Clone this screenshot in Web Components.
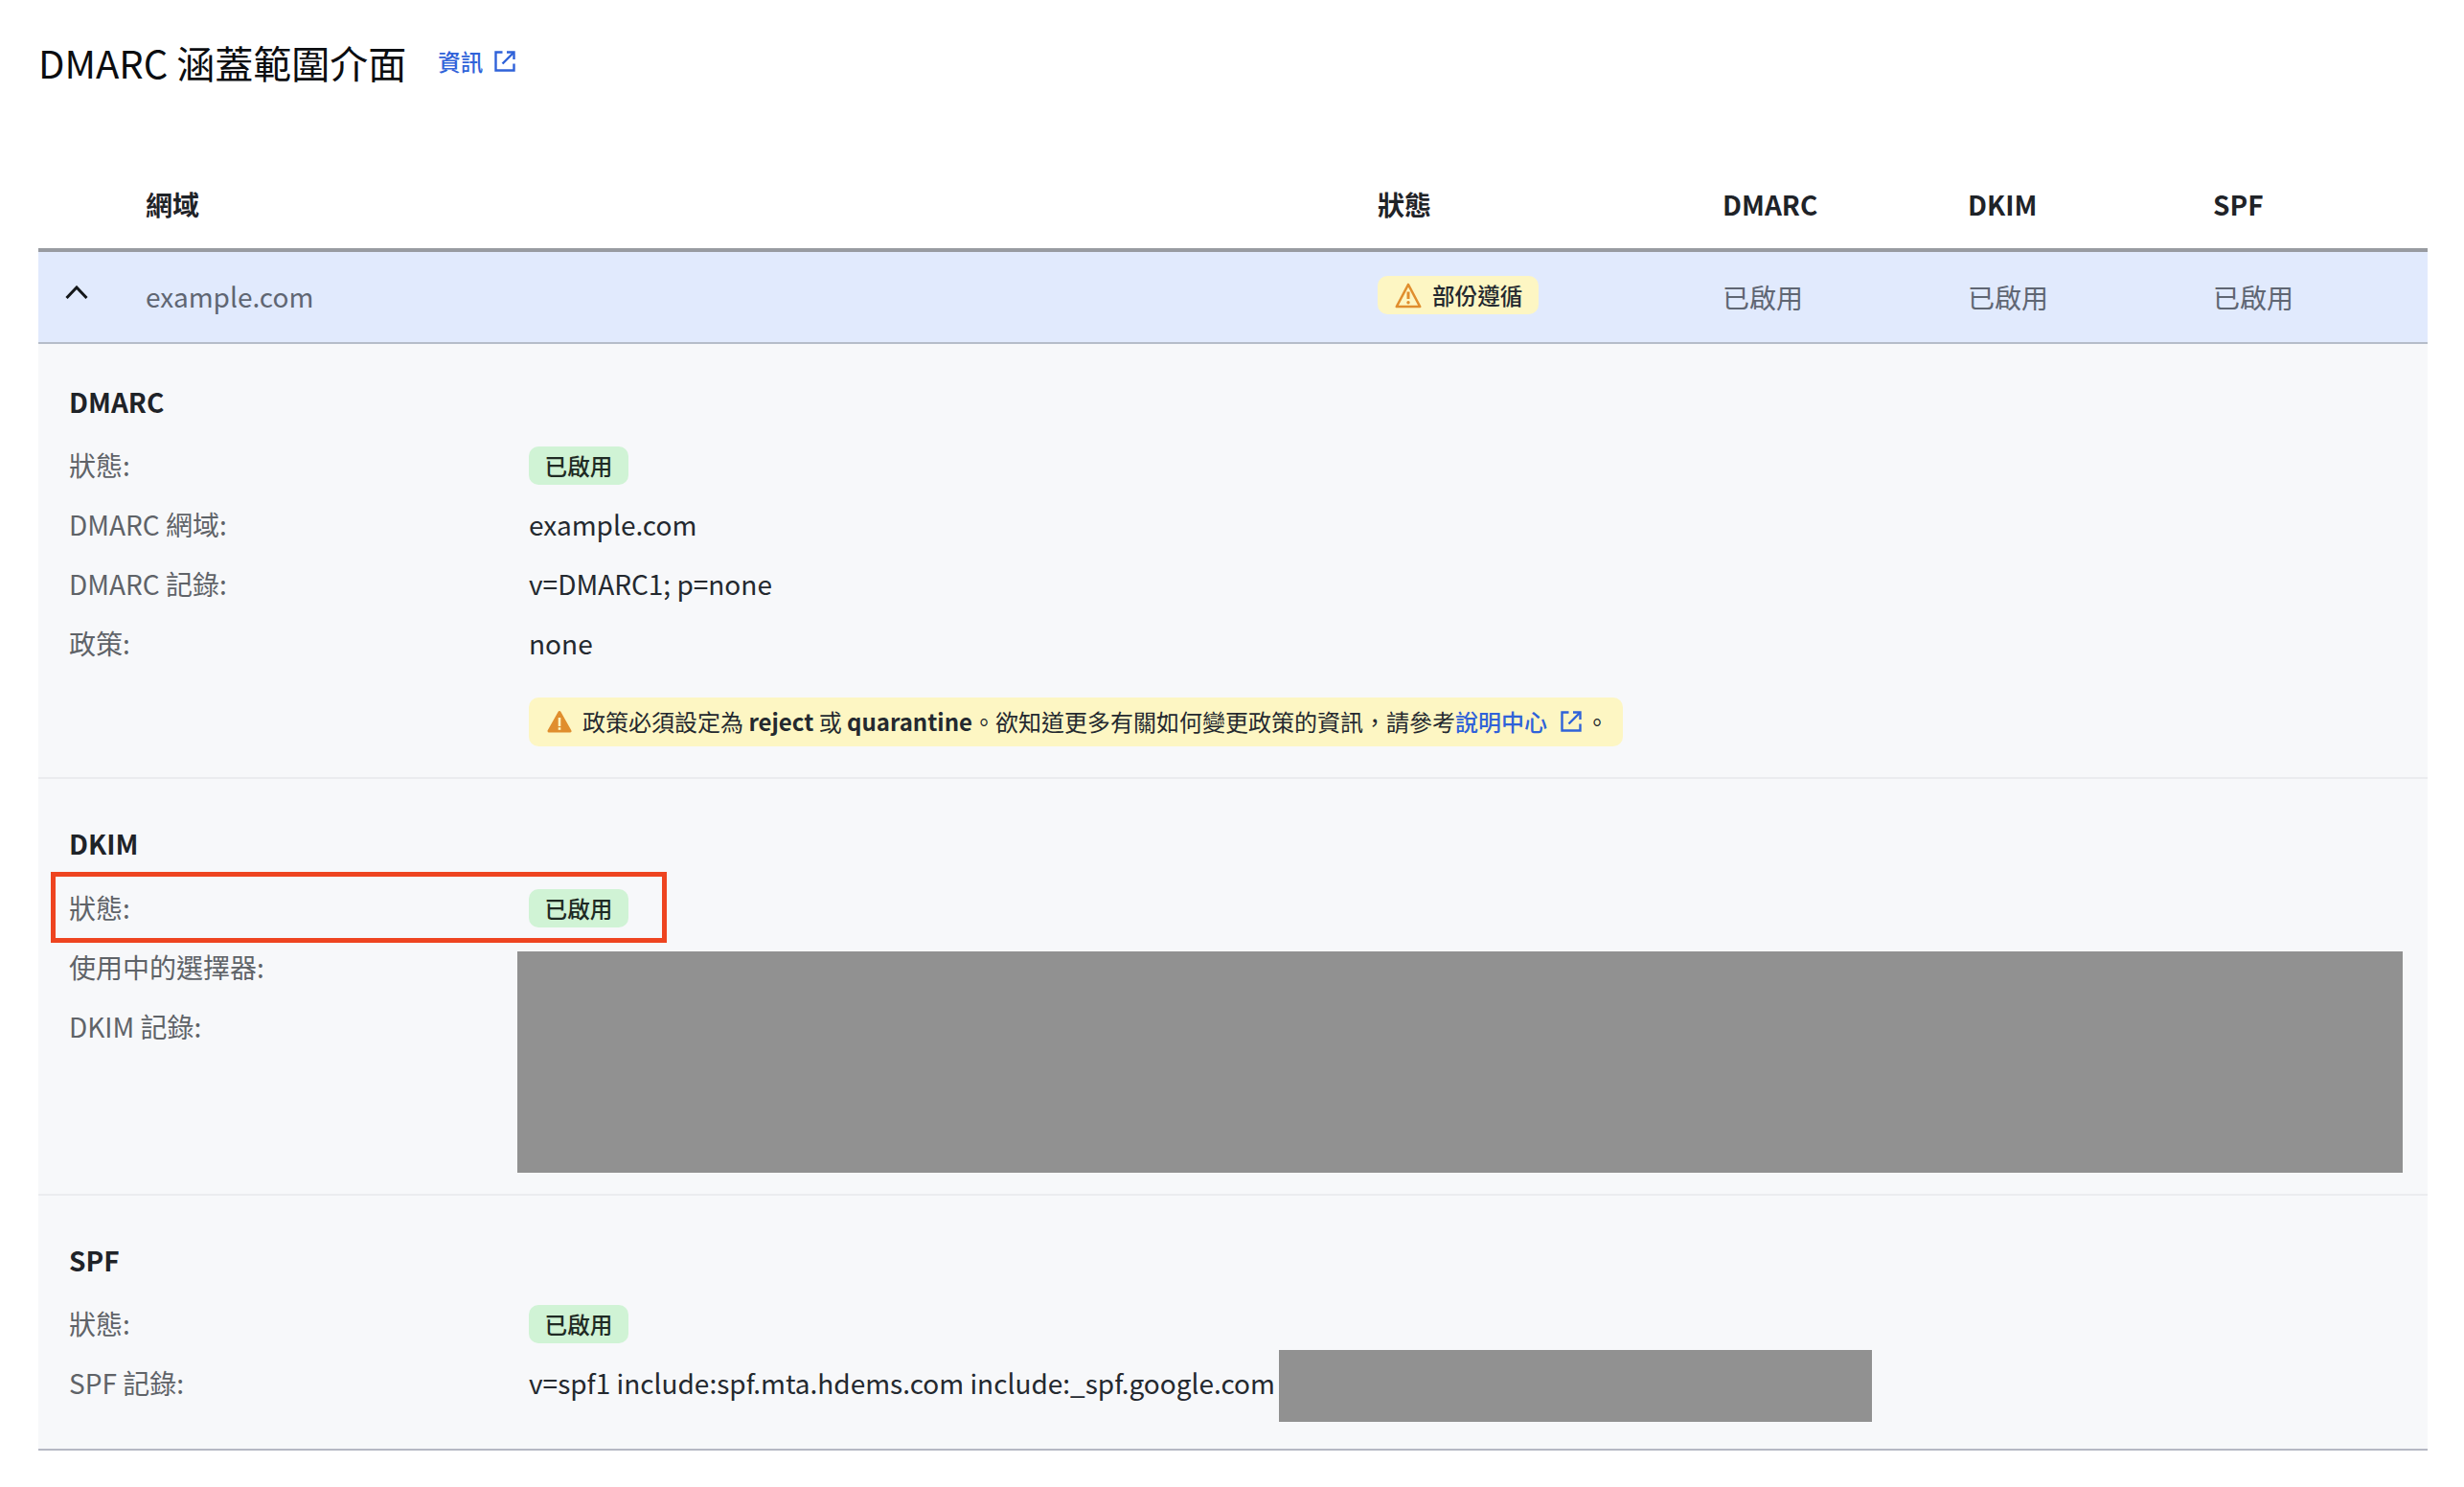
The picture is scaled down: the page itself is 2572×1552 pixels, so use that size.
<!DOCTYPE html>
<html lang="zh-TW">
<head>
<meta charset="utf-8">
<title>DMARC 涵蓋範圍介面</title>
<style>
  html, body { margin: 0; background: #fff; }
  body { font-family: "Noto Sans CJK TC", "Noto Sans", sans-serif; color: #24292f; }
</style>
</head>
<body>
<dmarc-report>
  <page-title>
    DMARC 涵蓋範圍介面
    <ext-link slot="link" size="23.5" gap="12">資訊</ext-link>
  </page-title>
  <table-head></table-head>
  <domain-row domain="example.com"></domain-row>

  <detail-section heading="DMARC" pad-top="42.5" pad-bottom="32" divider>
    <info-row label="狀態:"><status-badge>已啟用</status-badge></info-row>
    <info-row label="DMARC 網域:">example.com</info-row>
    <info-row label="DMARC 記錄:">v=DMARC1; p=none</info-row>
    <info-row label="政策:">none</info-row>
    <policy-alert>
      政策必須設定為 <b>reject</b> 或 <b>quarantine</b>。欲知道更多有關如何變更政策的資訊&#xFF0C;請參考<ext-link size="24" gap="14" style="margin-right: 4px">說明中心</ext-link>。
    </policy-alert>
  </detail-section>

  <detail-section heading="DKIM" pad-top="50.5" pad-bottom="21.5" divider>
    <info-row label="狀態:" marked><status-badge>已啟用</status-badge></info-row>
    <redact-split>
      <info-row slot="labels" label="使用中的選擇器:"></info-row>
      <info-row slot="labels" label="DKIM 記錄:"></info-row>
    </redact-split>
  </detail-section>

  <detail-section heading="SPF" pad-top="50" pad-bottom="36.5">
    <info-row label="狀態:"><status-badge>已啟用</status-badge></info-row>
    <info-row label="SPF 記錄:">v=spf1 include:spf.mta.hdems.com include:_spf.google.com<redact-block></redact-block></info-row>
  </detail-section>
</dmarc-report>

<script>
const COLUMNS = '112px 1286px 360px 256px 256px 1fr';

const EXT_ICON = `<svg viewBox="0 0 22 22" width="22" height="22" fill="none" stroke="currentColor" stroke-width="2.4">
  <path d="M8.5 1.5H1.5v19h19V13.5"/><path d="M8.5 13.5 20 2"/><path d="M13 1.5h7.5V9"/></svg>`;

class DmarcReport extends HTMLElement {
  constructor() {
    super();
    this.attachShadow({ mode: 'open' }).innerHTML = `
      <style>
        :host { display: block; padding: 40px 38px 0 40px; }
      </style>
      <slot></slot>`;
  }
}

class PageTitle extends HTMLElement {
  constructor() {
    super();
    this.attachShadow({ mode: 'open' }).innerHTML = `
      <style>
        :host { display: flex; align-items: center; gap: 33px; height: 50px; margin-bottom: 77px; font-size: 40px; line-height: 50px; color: #0b0d10; }
        .link { margin-top: -2px; display: flex; }
      </style>
      <span><slot></slot></span>
      <span class="link"><slot name="link"></slot></span>`;
  }
}

class ExtLink extends HTMLElement {
  constructor() {
    super();
    const size = this.getAttribute('size') || 24;
    const gap = this.getAttribute('gap') || 10;
    this.attachShadow({ mode: 'open' }).innerHTML = `
      <style>
        :host { display: inline-flex; align-items: center; gap: ${gap}px; height: 30px; font-size: ${size}px; color: #2f62d9; line-height: 30px; font-weight: 500; vertical-align: top; }
        svg { display: block; }
      </style>
      <span><slot></slot></span>${EXT_ICON}`;
  }
}

class TableHead extends HTMLElement {
  constructor() {
    super();
    this.attachShadow({ mode: 'open' }).innerHTML = `
      <style>
        :host { display: grid; grid-template-columns: ${COLUMNS}; align-items: center; height: 92px; border-bottom: 4px solid #989ba1; font-size: 28px; font-weight: 700; color: #1f2328; line-height: 34px; }
      </style>
      <span></span><span>網域</span><span>狀態</span><span>DMARC</span><span>DKIM</span><span>SPF</span>`;
  }
}

class DomainRow extends HTMLElement {
  constructor() {
    super();
    const domain = this.getAttribute('domain');
    this.attachShadow({ mode: 'open' }).innerHTML = `
      <style>
        :host { display: grid; grid-template-columns: ${COLUMNS}; align-items: center; height: 94px; border-bottom: 2px solid #b5bcc9; background: #e1eafd; font-size: 28px; color: #5f6673; line-height: 34px; }
        .chev { display: block; margin: -11px 0 0 28px; }
        .name { padding-bottom: 2px; }
        .warn { display: inline-flex; align-items: center; gap: 11px; height: 40px; width: 168px; box-sizing: border-box; padding-left: 18px; margin-top: -4px; border-radius: 10px; background: #fdf6c3; color: #24292f; font-size: 23.6px; font-weight: 500; }
      </style>
      <svg class="chev" viewBox="0 0 24 14" width="24" height="14" fill="none" stroke="#14171a" stroke-width="3"><path d="M1.5 13 12 2l10.5 11"/></svg>
      <span class="name">${domain}</span>
      <span><span class="warn">
        <svg viewBox="0 0 28 27" width="28" height="27" fill="none" stroke="#e08e2e" stroke-width="2.6" stroke-linejoin="round"><path d="M14 2 1.8 25h24.4z"/><path d="M14 9.5v7.5" stroke-width="3"/><circle cx="14" cy="20.7" r="1.7" fill="#e08e2e" stroke="none"/></svg>
        部份遵循</span></span>
      <span>已啟用</span><span>已啟用</span><span>已啟用</span>`;
  }
}

class DetailSection extends HTMLElement {
  constructor() {
    super();
    const top = this.getAttribute('pad-top');
    const bottom = this.getAttribute('pad-bottom');
    const line = this.hasAttribute('divider') ? '#ebecef' : '#b5b8c4';
    this.attachShadow({ mode: 'open' }).innerHTML = `
      <style>
        :host { display: block; padding: ${top}px 32px ${bottom}px; background: #f7f8fa; border-bottom: 2px solid ${line}; }
        h3 { margin: 0 0 19.5px; font-size: 28px; line-height: 34px; font-weight: 700; color: #1f2328; }
      </style>
      <h3>${this.getAttribute('heading')}</h3>
      <slot></slot>`;
  }
}

class InfoRow extends HTMLElement {
  constructor() {
    super();
    this.attachShadow({ mode: 'open' }).innerHTML = `
      <style>
        :host { display: grid; grid-template-columns: 480px 1fr; grid-template-rows: 62.2px; align-items: center; height: 62.2px; font-size: 28px; line-height: 34px; color: #24292f; position: relative; white-space: nowrap; }
        .label { color: #5f6368; padding-bottom: 3px; }
        .value { display: flex; align-items: center; height: 34px; padding-bottom: 3px; }
        :host([marked])::after { content: ""; position: absolute; left: -19.5px; top: -7px; width: 643.5px; height: 74px; box-sizing: border-box; border: 5px solid #ee4420; }
      </style>
      <span class="label">${this.getAttribute('label')}</span>
      <div class="value"><slot></slot></div>`;
  }
}

class StatusBadge extends HTMLElement {
  constructor() {
    super();
    this.attachShadow({ mode: 'open' }).innerHTML = `
      <style>
        :host { display: inline-flex; align-items: center; justify-content: center; width: 104px; height: 40px; margin-top: 3px; border-radius: 10px; background: #d0f3d5; color: #1f2a24; font-size: 23.6px; font-weight: 500; line-height: 1; }
        span { position: relative; top: 1px; }
      </style>
      <span><slot></slot></span>`;
  }
}

class PolicyAlert extends HTMLElement {
  constructor() {
    super();
    this.attachShadow({ mode: 'open' }).innerHTML = `
      <style>
        :host { display: flex; align-items: center; gap: 11px; width: 1142px; height: 51px; box-sizing: border-box; padding-left: 19px; margin: 24.2px 0 0 480px; border-radius: 10px; background: #fdf6c3; color: #24292f; font-size: 24px; line-height: 30px; white-space: nowrap; }
        svg { flex: none; }
      </style>
      <svg viewBox="0 0 26 24" width="26" height="24"><path d="M13 2.5 24 22H2z" fill="#e08e2e" stroke="#e08e2e" stroke-width="3" stroke-linejoin="round"/><path d="M11.7 8h2.6v9h-2.6z" fill="#fdf6c3"/><rect x="11.7" y="18.2" width="2.6" height="2.6" fill="#fdf6c3"/></svg>
      <span><slot></slot></span>`;
  }
}

class RedactBlock extends HTMLElement {
  constructor() {
    super();
    this.attachShadow({ mode: 'open' }).innerHTML = `
      <style>
        :host { display: block; flex: none; width: 619px; height: 75px; margin: 7px 0 0 4px; background: #919191; }
      </style>`;
  }
}

class RedactSplit extends HTMLElement {
  constructor() {
    super();
    this.attachShadow({ mode: 'open' }).innerHTML = `
      <style>
        :host { display: grid; grid-template-columns: 468px 1968px; }
        .block { height: 231px; margin-top: 14px; background: #919191; }
      </style>
      <div><slot name="labels"></slot></div>
      <div class="block"></div>`;
  }
}

customElements.define('dmarc-report', DmarcReport);
customElements.define('page-title', PageTitle);
customElements.define('ext-link', ExtLink);
customElements.define('table-head', TableHead);
customElements.define('domain-row', DomainRow);
customElements.define('detail-section', DetailSection);
customElements.define('info-row', InfoRow);
customElements.define('status-badge', StatusBadge);
customElements.define('policy-alert', PolicyAlert);
customElements.define('redact-block', RedactBlock);
customElements.define('redact-split', RedactSplit);
</script>
</body>
</html>
